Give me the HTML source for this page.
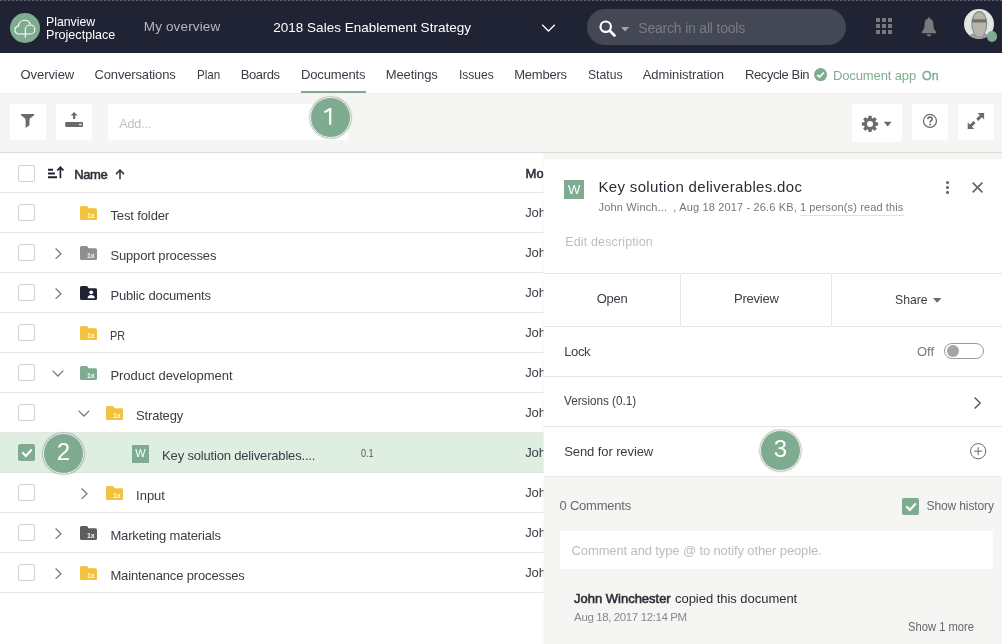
<!DOCTYPE html>
<html>
<head>
<meta charset="utf-8">
<title>Documents</title>
<style>
*{box-sizing:border-box;margin:0;padding:0}
html,body{width:1002px;height:644px;overflow:hidden;background:#fff}
body{font-family:"Liberation Sans",sans-serif;color:#3a3d46;position:relative}
.abs{position:absolute;white-space:nowrap}
.t{position:absolute;white-space:nowrap;line-height:1;font-size:13px;color:#3a3d46}
svg{position:absolute;overflow:visible}
#hdr{position:absolute;left:0;top:0;width:1002px;height:53px;background:#1f2333}
#nav{position:absolute;left:0;top:53px;width:1002px;height:40px;background:#fff}
#tool{position:absolute;left:0;top:93px;width:1002px;height:60px;background:#f5f5f3;border-bottom:1px solid #d9d9d7;box-shadow:inset 0 1px 0 #ebebea}
.btn{position:absolute;background:#fff;border-radius:2px}
#tbl{position:absolute;left:0;top:153px;width:544px;height:491px;background:#fff}
.row{position:absolute;left:0;width:544px;height:40px;border-bottom:1px solid #e6e6e6}
.cb{position:absolute;left:18px;top:11px;width:17px;height:17px;border:1px solid #cfd2cf;border-radius:2px;background:#fff}
#strip{position:absolute;left:544px;top:153px;width:458px;height:491px;background:#f5f5f3;box-shadow:-1px 0 0 rgba(245,245,243,.55)}
#panel{position:absolute;left:544px;top:159px;width:458px;height:485px;background:#fff}
.hl{position:absolute;left:0;width:458px;height:1px;background:#e6e6e6}
.vl{position:absolute;width:1px;background:#e6e6e6}
#cmt{position:absolute;left:0;top:317px;width:458px;height:168px;background:#f5f5f3;box-shadow:inset 0 1px 0 #ececea}
.badge{position:absolute;width:41px;height:41px;border-radius:50%;background:#7fac91;border:1.500px solid #f1f4f1;box-shadow:0 0 1.500px .5px rgba(0,0,0,.38);color:#fff;font-size:24px;text-align:center;line-height:35px}
.g{color:#7fac91}
.sb{-webkit-text-stroke:.55px currentColor}
#hdr,#nav,#tool,#tbl,#panel,.badge{will-change:transform}
</style>
</head>
<body>

<!-- HEADER -->
<div id="hdr">
  <div class="abs" style="left:0;top:0;width:1002px;height:1px;background:repeating-linear-gradient(90deg,#62656f 0 2px,#272b3a 2px 4px)"></div>
  <svg style="left:10px;top:13px" width="30" height="30" viewBox="0 0 30 30">
    <circle cx="15" cy="15" r="15" fill="#7fac91"/>
    <path d="M15.300 21H8.900C6.600 21 4.900 19.300 4.900 17.100 4.900 15 6.400 13.400 8.400 13.100 8.700 9.700 11.300 7.200 14.600 7.200 17.200 7.200 19.300 8.700 20.200 11" fill="none" stroke="#fff" stroke-width="1.100" stroke-linecap="round"/>
    <path d="M15.300 24.200V16.600C15.300 14 17.400 12 20.100 12 22.800 12 24.900 14 24.900 16.500 24.900 19 22.800 21 20.100 21H15.300" fill="none" stroke="#fff" stroke-width="1.100" stroke-linecap="round" stroke-linejoin="round"/>
  </svg>
  <div class="t" style="left:46.10px;top:14.57px;transform-origin:0 50%;transform:scaleX(0.9087);color:#fff;font-size:13.500px">Planview</div>
  <div class="t" style="left:46.10px;top:27.82px;transform-origin:0 50%;transform:scaleX(0.9314);color:#fff;font-size:13.500px">Projectplace</div>
  <div class="t" style="left:143.75px;top:19.82px;letter-spacing:0.148px;color:#b4b7be;font-size:13.500px">My overview</div>
  <div class="t" style="left:273.25px;top:20.82px;letter-spacing:0.012px;color:#fff;font-size:13.500px">2018 Sales Enablement Strategy</div>
  <svg style="left:541px;top:23px" width="15" height="10" viewBox="0 0 15 10"><path d="M1.200 1.700l6.300 6.300 6.300-6.300" fill="none" stroke="#fff" stroke-width="1.250"/></svg>

  <div class="abs" style="left:587px;top:9px;width:259px;height:36px;border-radius:18px;background:#444854"></div>
  <svg style="left:598px;top:19px" width="20" height="20" viewBox="0 0 20 20"><circle cx="7.700" cy="7.700" r="5.200" fill="none" stroke="#fff" stroke-width="2.200"/><path d="M11.800 11.800l4.700 4.700" stroke="#fff" stroke-width="2.700" stroke-linecap="round"/></svg>
  <svg style="left:621px;top:26.5px" width="9" height="5" viewBox="0 0 9 5"><path d="M0 0h8.200l-4.100 4.400z" fill="#a3a5ab"/></svg>
  <div class="t" style="left:638.25px;top:21.40px;letter-spacing:-0.195px;color:#787c86;font-size:14px">Search in all tools</div>

  <svg style="left:876px;top:18px" width="16" height="16" viewBox="0 0 16 16" fill="#7a7a7a" shape-rendering="crispEdges"><rect x="0" y="0" width="4" height="4"/><rect x="6" y="0" width="4" height="4"/><rect x="12" y="0" width="4" height="4"/><rect x="0" y="6" width="4" height="4"/><rect x="6" y="6" width="4" height="4"/><rect x="12" y="6" width="4" height="4"/><rect x="0" y="12" width="4" height="4"/><rect x="6" y="12" width="4" height="4"/><rect x="12" y="12" width="4" height="4"/></svg>
  <svg style="left:921px;top:16.500px" width="16" height="20" viewBox="0 0 16 20"><path d="M7.900.3c.6 0 1 .4 1 1v.5c2 .5 3.400 2.200 3.400 4.500 0 4 .6 6.300 2.800 8.600v1.400H.8v-1.400c2.200-2.300 2.800-4.600 2.800-8.600 0-2.300 1.400-4 3.400-4.500v-.5c0-.6.400-1 .9-1zM5.600 17.200h4.600c0 1.200-1 2.200-2.300 2.200s-2.300-1-2.300-2.200z" fill="#7a7a7a"/></svg>

  <svg style="left:964px;top:9px" width="30" height="30" viewBox="0 0 30 30">
    <defs><clipPath id="av"><circle cx="15" cy="15" r="15"/></clipPath></defs>
    <g clip-path="url(#av)">
      <rect width="30" height="30" fill="#e3e6e3"/>
      <path d="M3 30c1-3 3.500-4.500 6-5.500l12 0c2.500 1 5 2.500 6 5.500z" fill="#9c9d9c"/>
      <ellipse cx="15.300" cy="15" rx="8" ry="13" fill="#85868a"/>
      <ellipse cx="15.300" cy="15.500" rx="6.900" ry="12.200" fill="#b4b4b0"/>
      <rect x="8" y="10.300" width="14.600" height="3.200" rx="1" fill="#6f7275"/><g fill="#e8c23a"><circle cx="13" cy="6" r=".6"/><circle cx="15.500" cy="7.500" r=".6"/><circle cx="17.500" cy="6.500" r=".6"/><circle cx="14" cy="9" r=".6"/><circle cx="16.500" cy="9.500" r=".6"/><circle cx="12" cy="16" r=".6"/><circle cx="15" cy="17.500" r=".6"/><circle cx="18" cy="16" r=".6"/><circle cx="20" cy="17" r=".6"/><circle cx="14" cy="20.500" r=".6"/><circle cx="16.500" cy="22" r=".6"/><circle cx="15" cy="24" r=".6"/><circle cx="17" cy="26.500" r=".6"/></g>
      
    </g>
  </svg>
  <div class="abs" style="left:987px;top:31.400px;width:10.200px;height:10.200px;border-radius:50%;background:#7fac91"></div>
</div>

<!-- NAV -->
<div id="nav">
  <div class="t" style="left:20.50px;top:15.25px;letter-spacing:-0.062px;">Overview</div>
  <div class="t" style="left:94.50px;top:15.25px;letter-spacing:-0.155px;">Conversations</div>
  <div class="t" style="left:196.75px;top:15.25px;transform-origin:0 50%;transform:scaleX(0.8932);">Plan</div>
  <div class="t" style="left:240.75px;top:15.25px;letter-spacing:-0.391px;">Boards</div>
  <div class="t" style="left:301.00px;top:15.25px;letter-spacing:-0.156px;">Documents</div>
  <div class="t" style="left:385.75px;top:15.25px;letter-spacing:-0.107px;">Meetings</div>
  <div class="t" style="left:459.00px;top:15.25px;transform-origin:0 50%;transform:scaleX(0.9247);">Issues</div>
  <div class="t" style="left:514.25px;top:15.25px;letter-spacing:-0.240px;">Members</div>
  <div class="t" style="left:587.75px;top:15.25px;transform-origin:0 50%;transform:scaleX(0.9360);">Status</div>
  <div class="t" style="left:642.75px;top:15.25px;letter-spacing:-0.087px;">Administration</div>
  <div class="t" style="left:745.00px;top:15.25px;letter-spacing:-0.404px;">Recycle Bin</div>
  <svg style="left:814.300px;top:15.200px" width="13.100" height="13.100" viewBox="0 0 14 14"><circle cx="7" cy="7" r="7" fill="#7fac91"/><path d="M3.500 7.300l2.400 2.400 4.600-4.900" fill="none" stroke="#fff" stroke-width="1.800"/></svg>
  <div class="t g" style="left:833.00px;top:16.00px;letter-spacing:-0.124px;">Document app</div>
  <div class="t g sb" style="left:922.00px;top:16.00px;transform-origin:0 50%;transform:scaleX(0.9571);-webkit-text-stroke-width:.4px">On</div>
  <div class="abs" style="left:301px;top:38px;width:65px;height:2px;background:#7fac91"></div>
</div>

<!-- TOOLBAR -->
<div id="tool">
  <div class="btn" style="left:10px;top:11px;width:36px;height:36px"></div>
  <svg style="left:21.400px;top:20.900px" width="13.200" height="14" viewBox="0 0 13.200 14"><path d="M0 0H13.200V1C12.400 2.600 8.500 3.600 8.500 6V11.300L4.600 14V6C4.600 3.600.8 2.600 0 1Z" fill="#6b6b6b"/></svg>
  <div class="btn" style="left:56px;top:11px;width:36px;height:36px"></div>
  <svg style="left:65px;top:18.600px" width="18" height="15" viewBox="0 0 18 15">
    <rect x=".2" y="10.100" width="17.800" height="4.800" rx="1" fill="#6b6b6b"/>
    <rect x="14.100" y="11.800" width="2.400" height="1.400" fill="#fff"/>
    <path d="M9.100 0l3.500 3.600H10.200V7H8V3.600H5.600z" fill="#6b6b6b"/>
  </svg>
  <div class="btn" style="left:108px;top:11px;width:240px;height:36px"></div>
  <div class="t" style="left:119.30px;top:25.02px;letter-spacing:-0.154px;color:#bcbebc;font-size:12.500px">Add...</div>

  <div class="btn" style="left:852px;top:11px;width:50px;height:38px"></div>
  <div class="btn" style="left:912px;top:11px;width:36px;height:36px"></div>
  <div class="btn" style="left:958px;top:11px;width:36px;height:36px"></div>
</div>
<svg style="left:0;top:0" width="1002" height="160" viewBox="0 0 1002 160">
  <g transform="translate(870 123.900)" fill="#6b6b6b">
    <circle r="6.100"/>
    <rect x="-1.750" y="-8.150" width="3.500" height="5" rx=".7"/>
    <rect x="-1.750" y="-8.150" width="3.500" height="5" rx=".7" transform="rotate(45)"/>
    <rect x="-1.750" y="-8.150" width="3.500" height="5" rx=".7" transform="rotate(90)"/>
    <rect x="-1.750" y="-8.150" width="3.500" height="5" rx=".7" transform="rotate(135)"/>
    <rect x="-1.750" y="-8.150" width="3.500" height="5" rx=".7" transform="rotate(180)"/>
    <rect x="-1.750" y="-8.150" width="3.500" height="5" rx=".7" transform="rotate(225)"/>
    <rect x="-1.750" y="-8.150" width="3.500" height="5" rx=".7" transform="rotate(270)"/>
    <rect x="-1.750" y="-8.150" width="3.500" height="5" rx=".7" transform="rotate(315)"/>
    <circle r="3" fill="#fff"/>
  </g>
  <path d="M883.700 121.800h8l-4 4.700z" fill="#6b6b6b"/>
  <circle cx="930" cy="120.900" r="6.500" fill="none" stroke="#6b6b6b" stroke-width="1.200"/>
  <path d="M927.900 119.200c0-1.300 1-2.100 2.200-2.100s2.100.8 2.100 1.900c0 1.700-2.100 1.700-2.100 3.500" fill="none" stroke="#6b6b6b" stroke-width="1.550"/>
  <circle cx="930.100" cy="124.500" r=".95" fill="#6b6b6b"/>
  <path d="M984.100 112.900v6.600l-2.200-2.200-3.600 3.600-2.100-2.100 3.600-3.600-2.200-2.300z" fill="#6b6b6b"/>
  <path d="M967.700 129v-6.600l2.200 2.200 3.600-3.600 2.100 2.100-3.600 3.600 2.200 2.300z" fill="#6b6b6b"/>
</svg>
<!-- TABLE -->
<div id="tbl">
  <div class="row" style="top:0"><div class="cb" style="top:12px"></div></div>
  <svg style="left:47.800px;top:12.500px" width="17" height="13" viewBox="0 0 17 13"><path d="M0 3.700h5M0 7.500h6.900M0 11.300h9" stroke="#1f2230" stroke-width="1.900" fill="none"/><path d="M12.400 12.200V1.400M9.200 4.500l3.200-3.200 3.200 3.200" stroke="#1f2230" stroke-width="1.700" fill="none"/></svg>
  <div class="t sb" style="left:74.20px;top:14.90px;letter-spacing:-0.362px;color:#2d3039">Name</div>
  <svg style="left:115px;top:15.800px" width="10" height="11" viewBox="0 0 10 11"><path d="M5 10.200V1.200M1 5.100l4-4 4 4" stroke="#33363e" stroke-width="1.500" fill="none"/></svg>
  <div class="t sb" style="left:525.60px;top:14.00px;color:#2d3039">Mo</div>
  <div class="row" style="top:40px">
    <div class="cb"></div>
    <svg style="left:80px;top:13px" width="17" height="14" viewBox="0 0 17 14"><path d="M1.500 0H6.300c.6 0 .9.200 1.200.6L8.600 2.200H15.500A1.500 1.500 0 0 1 17 3.700V12.500A1.500 1.500 0 0 1 15.500 14H1.500A1.500 1.500 0 0 1 0 12.500V1.500A1.500 1.500 0 0 1 1.500 0Z" fill="#f0c23d"/><text x="7" y="12.100" font-family="Liberation Sans, sans-serif" font-size="7.100" font-weight="bold" fill="#fff" fill-opacity=".92" letter-spacing="-.2">1x</text></svg>
    <div class="t" style="left:110.40px;top:15.60px;letter-spacing:-0.118px;">Test folder</div>
    <div class="t" style="left:525.30px;top:13.00px;letter-spacing:-.2px">Joh</div>
  </div>
  <div class="row" style="top:80px">
    <div class="cb"></div>
    <svg style="left:54.7px;top:14.900px" width="7" height="11.400" viewBox="0 0 7 11.400"><path d="M.6.500l5.400 5.200-5.400 5.200" fill="none" stroke="#777" stroke-width="1.250"/></svg>
    <svg style="left:80px;top:13px" width="17" height="14" viewBox="0 0 17 14"><path d="M1.500 0H6.300c.6 0 .9.200 1.200.6L8.600 2.200H15.500A1.500 1.500 0 0 1 17 3.700V12.500A1.500 1.500 0 0 1 15.500 14H1.500A1.500 1.500 0 0 1 0 12.500V1.500A1.500 1.500 0 0 1 1.500 0Z" fill="#8f8f8f"/><text x="7" y="12.100" font-family="Liberation Sans, sans-serif" font-size="7.100" font-weight="bold" fill="#fff" fill-opacity=".92" letter-spacing="-.2">1x</text></svg>
    <div class="t" style="left:110.40px;top:15.60px;letter-spacing:-0.150px;">Support processes</div>
    <div class="t" style="left:525.30px;top:13.00px;letter-spacing:-.2px">Joh</div>
  </div>
  <div class="row" style="top:120px">
    <div class="cb"></div>
    <svg style="left:54.7px;top:14.900px" width="7" height="11.400" viewBox="0 0 7 11.400"><path d="M.6.500l5.400 5.200-5.400 5.200" fill="none" stroke="#777" stroke-width="1.250"/></svg>
    <svg style="left:80px;top:13px" width="17" height="14" viewBox="0 0 17 14"><path d="M1.500 0H6.300c.6 0 .9.200 1.200.6L8.600 2.200H15.500A1.500 1.500 0 0 1 17 3.700V12.500A1.500 1.500 0 0 1 15.500 14H1.500A1.500 1.500 0 0 1 0 12.500V1.500A1.500 1.500 0 0 1 1.500 0Z" fill="#1f2333"/><circle cx="11.200" cy="6.300" r="1.900" fill="#fff"/><path d="M7.600 12.200c0-2.200 1.600-3.200 3.600-3.200s3.600 1 3.600 3.200z" fill="#fff"/></svg>
    <div class="t" style="left:110.40px;top:15.60px;letter-spacing:-0.135px;">Public documents</div>
    <div class="t" style="left:525.30px;top:13.00px;letter-spacing:-.2px">Joh</div>
  </div>
  <div class="row" style="top:160px">
    <div class="cb"></div>
    <svg style="left:80px;top:13px" width="17" height="14" viewBox="0 0 17 14"><path d="M1.500 0H6.300c.6 0 .9.200 1.200.6L8.600 2.200H15.500A1.500 1.500 0 0 1 17 3.700V12.500A1.500 1.500 0 0 1 15.500 14H1.500A1.500 1.500 0 0 1 0 12.500V1.500A1.500 1.500 0 0 1 1.500 0Z" fill="#f0c23d"/><text x="7" y="12.100" font-family="Liberation Sans, sans-serif" font-size="7.100" font-weight="bold" fill="#fff" fill-opacity=".92" letter-spacing="-.2">1x</text></svg>
    <div class="t" style="left:110.40px;top:15.60px;transform-origin:0 50%;transform:scaleX(0.8360);">PR</div>
    <div class="t" style="left:525.30px;top:13.00px;letter-spacing:-.2px">Joh</div>
  </div>
  <div class="row" style="top:200px">
    <div class="cb"></div>
    <svg style="left:52.1px;top:17.300px" width="11.800" height="7" viewBox="0 0 11.800 7"><path d="M.5.600l5.400 5.400 5.400-5.400" fill="none" stroke="#777" stroke-width="1.250"/></svg>
    <svg style="left:80px;top:13px" width="17" height="14" viewBox="0 0 17 14"><path d="M1.500 0H6.300c.6 0 .9.200 1.200.6L8.600 2.200H15.500A1.500 1.500 0 0 1 17 3.700V12.500A1.500 1.500 0 0 1 15.500 14H1.500A1.500 1.500 0 0 1 0 12.500V1.500A1.500 1.500 0 0 1 1.500 0Z" fill="#7fac91"/><text x="7" y="12.100" font-family="Liberation Sans, sans-serif" font-size="7.100" font-weight="bold" fill="#fff" fill-opacity=".92" letter-spacing="-.2">1x</text></svg>
    <div class="t" style="left:110.40px;top:15.60px;letter-spacing:-0.042px;">Product development</div>
    <div class="t" style="left:525.30px;top:13.00px;letter-spacing:-.2px">Joh</div>
  </div>
  <div class="row" style="top:240px">
    <div class="cb"></div>
    <svg style="left:78.1px;top:17.300px" width="11.800" height="7" viewBox="0 0 11.800 7"><path d="M.5.600l5.400 5.400 5.400-5.400" fill="none" stroke="#777" stroke-width="1.250"/></svg>
    <svg style="left:106px;top:13px" width="17" height="14" viewBox="0 0 17 14"><path d="M1.500 0H6.300c.6 0 .9.200 1.200.6L8.600 2.200H15.500A1.500 1.500 0 0 1 17 3.700V12.500A1.500 1.500 0 0 1 15.500 14H1.500A1.500 1.500 0 0 1 0 12.500V1.500A1.500 1.500 0 0 1 1.500 0Z" fill="#f0c23d"/><text x="7" y="12.100" font-family="Liberation Sans, sans-serif" font-size="7.100" font-weight="bold" fill="#fff" fill-opacity=".92" letter-spacing="-.2">1x</text></svg>
    <div class="t" style="left:136.10px;top:15.60px;letter-spacing:-0.189px;">Strategy</div>
    <div class="t" style="left:525.30px;top:13.00px;letter-spacing:-.2px">Joh</div>
  </div>
  <div class="row" style="top:280px;background:#deeee0;border-bottom-color:#d6e8d9">
    <div class="cb" style="background:#7fac91;border-color:#7fac91"></div>
    <svg style="left:18px;top:11px" width="17" height="17" viewBox="0 0 17 17"><path d="M4.300 8.200l3.500 3.700 6-6.400" fill="none" stroke="#fff" stroke-width="2.100"/></svg>
    <div class="abs" style="left:132px;top:12px;width:17px;height:17.500px;background:#7fac91"></div>
    <div class="t" style="left:135.300px;top:14.800px;font-size:11px;color:#fff">W</div>
    <div class="t" style="left:162.10px;top:15.60px;letter-spacing:-0.177px;">Key solution deliverables....</div>
    <div class="t" style="left:361.30px;top:15.49px;transform-origin:0 50%;transform:scaleX(0.8302);font-size:11px;color:#555">0.1</div>
    <div class="t" style="left:525.30px;top:13.00px;letter-spacing:-.2px">Joh</div>
  </div>
  <div class="row" style="top:320px">
    <div class="cb"></div>
    <svg style="left:80.7px;top:14.900px" width="7" height="11.400" viewBox="0 0 7 11.400"><path d="M.6.500l5.400 5.200-5.400 5.200" fill="none" stroke="#777" stroke-width="1.250"/></svg>
    <svg style="left:106px;top:13px" width="17" height="14" viewBox="0 0 17 14"><path d="M1.500 0H6.300c.6 0 .9.200 1.200.6L8.600 2.200H15.500A1.500 1.500 0 0 1 17 3.700V12.500A1.500 1.500 0 0 1 15.500 14H1.500A1.500 1.500 0 0 1 0 12.500V1.500A1.500 1.500 0 0 1 1.500 0Z" fill="#f0c23d"/><text x="7" y="12.100" font-family="Liberation Sans, sans-serif" font-size="7.100" font-weight="bold" fill="#fff" fill-opacity=".92" letter-spacing="-.2">1x</text></svg>
    <div class="t" style="left:136.10px;top:15.60px;letter-spacing:-0.030px;">Input</div>
    <div class="t" style="left:525.30px;top:13.00px;letter-spacing:-.2px">Joh</div>
  </div>
  <div class="row" style="top:360px">
    <div class="cb"></div>
    <svg style="left:54.7px;top:14.900px" width="7" height="11.400" viewBox="0 0 7 11.400"><path d="M.6.500l5.400 5.200-5.400 5.200" fill="none" stroke="#777" stroke-width="1.250"/></svg>
    <svg style="left:80px;top:13px" width="17" height="14" viewBox="0 0 17 14"><path d="M1.500 0H6.300c.6 0 .9.200 1.200.6L8.600 2.200H15.500A1.500 1.500 0 0 1 17 3.700V12.500A1.500 1.500 0 0 1 15.500 14H1.500A1.500 1.500 0 0 1 0 12.500V1.500A1.500 1.500 0 0 1 1.500 0Z" fill="#5e5e5e"/><text x="7" y="12.100" font-family="Liberation Sans, sans-serif" font-size="7.100" font-weight="bold" fill="#fff" fill-opacity=".92" letter-spacing="-.2">1x</text></svg>
    <div class="t" style="left:110.40px;top:15.60px;letter-spacing:-0.158px;">Marketing materials</div>
    <div class="t" style="left:525.30px;top:13.00px;letter-spacing:-.2px">Joh</div>
  </div>
  <div class="row" style="top:400px">
    <div class="cb"></div>
    <svg style="left:54.7px;top:14.900px" width="7" height="11.400" viewBox="0 0 7 11.400"><path d="M.6.500l5.400 5.200-5.400 5.200" fill="none" stroke="#777" stroke-width="1.250"/></svg>
    <svg style="left:80px;top:13px" width="17" height="14" viewBox="0 0 17 14"><path d="M1.500 0H6.300c.6 0 .9.200 1.200.6L8.600 2.200H15.500A1.500 1.500 0 0 1 17 3.700V12.500A1.500 1.500 0 0 1 15.500 14H1.500A1.500 1.500 0 0 1 0 12.500V1.500A1.500 1.500 0 0 1 1.500 0Z" fill="#f0c23d"/><text x="7" y="12.100" font-family="Liberation Sans, sans-serif" font-size="7.100" font-weight="bold" fill="#fff" fill-opacity=".92" letter-spacing="-.2">1x</text></svg>
    <div class="t" style="left:110.40px;top:15.60px;letter-spacing:-0.141px;">Maintenance processes</div>
    <div class="t" style="left:525.30px;top:13.00px;letter-spacing:-.2px">Joh</div>
  </div>
</div>
<!-- PANEL -->
<div id="strip"></div>
<div id="panel">
  <div class="abs" style="left:20.400px;top:21px;width:19.600px;height:19px;background:#7fac91"></div>
  <div class="t" style="left:23.90px;top:24.20px;color:#fff;font-size:13px">W</div>
  <div class="t" style="left:54.50px;top:20.20px;letter-spacing:0.325px;font-size:15px;color:#2b2e37">Key solution deliverables.doc</div>
  <div class="t" style="left:54.50px;top:42.59px;letter-spacing:0.163px;font-size:11px;color:#777">John Winch...</div>
  <div class="t" style="left:129.30px;top:42.59px;letter-spacing:0.162px;font-size:11px;color:#777">, Aug 18 2017 - 26.6 KB,</div>
  <div class="t" style="left:255.90px;top:42.59px;letter-spacing:0.130px;font-size:11px;color:#777">1 person(s) read this</div>
  <div class="abs" style="left:256px;top:56px;width:104px;height:1px;background:#e2e2e2"></div>
  <svg style="left:401px;top:21px" width="40" height="16" viewBox="0 0 40 16">
    <circle cx="2.500" cy="2.600" r="1.550" fill="#696969"/><circle cx="2.500" cy="7.500" r="1.550" fill="#696969"/><circle cx="2.500" cy="12.400" r="1.550" fill="#696969"/>
    <path d="M27.700 2.700l9.700 9.700M37.400 2.700l-9.700 9.700" stroke="#666" stroke-width="1.700" fill="none"/>
  </svg>
  <div class="t" style="left:21.30px;top:76.92px;letter-spacing:0.135px;font-size:12.500px;color:#bcbfbc">Edit description</div>

  <div class="hl" style="top:114px"></div>
  <div class="t" style="left:52.70px;top:133.10px;letter-spacing:-0.271px;">Open</div>
  <div class="vl" style="left:136px;top:114px;height:53px"></div>
  <div class="t" style="left:190.00px;top:133.10px;letter-spacing:-0.225px;">Preview</div>
  <div class="vl" style="left:287px;top:114px;height:53px"></div>
  <div class="t" style="left:350.80px;top:134.30px;transform-origin:0 50%;transform:scaleX(0.9394);">Share</div>
  <svg style="left:389px;top:138.8px" width="8.400" height="5" viewBox="0 0 8.400 5"><path d="M0 0h8.400l-4.200 4.800z" fill="#6b6b6b"/></svg>

  <div class="hl" style="top:167px"></div>
  <div class="t" style="left:20.30px;top:185.90px;letter-spacing:-0.423px;">Lock</div>
  <div class="t" style="left:373.00px;top:185.90px;letter-spacing:-0.055px;color:#777">Off</div>
  <div class="abs" style="left:400px;top:184px;width:40px;height:16px;border:1px solid #9a9a9a;border-radius:8px;background:#fff"></div>
  <div class="abs" style="left:402.500px;top:186px;width:12.400px;height:12.400px;border-radius:50%;background:#a4a4a4"></div>

  <div class="hl" style="top:217px"></div>
  <div class="t" style="left:20.30px;top:235.10px;transform-origin:0 50%;transform:scaleX(0.8990);">Versions (0.1)</div>
  <svg style="left:430.300px;top:238px" width="7" height="12" viewBox="0 0 7 12"><path d="M.6.500l5.600 5.500-5.600 5.500" fill="none" stroke="#555" stroke-width="1.400"/></svg>

  <div class="hl" style="top:267px"></div>
  <div class="t" style="left:20.30px;top:286.00px;letter-spacing:-0.102px;">Send for review</div>
  <svg style="left:426px;top:284.2px" width="16.400" height="16.400" viewBox="0 0 16.400 16.400"><circle cx="8.200" cy="8.200" r="7.600" fill="none" stroke="#666" stroke-width="1"/><path d="M8.200 4.200v8M4.200 8.200h8" stroke="#666" stroke-width="1" fill="none"/></svg>

  <div id="cmt">
    <div class="t" style="left:15.60px;top:23.00px;letter-spacing:-0.234px;color:#686868">0 Comments</div>
    <div class="abs" style="left:358px;top:22px;width:17px;height:17px;border-radius:2px;background:#7fac91"></div>
    <svg style="left:358px;top:22px" width="17" height="17" viewBox="0 0 17 17"><path d="M4.300 8.200l3.500 3.700 6-6.400" fill="none" stroke="#fff" stroke-width="2.100"/></svg>
    <div class="t" style="left:382.60px;top:24.14px;letter-spacing:-0.128px;font-size:12px;color:#686868">Show history</div>
    <div class="abs" style="left:16px;top:55px;width:433px;height:38px;background:#fff"></div>
    <div class="t" style="left:27.60px;top:68.10px;letter-spacing:-0.127px;color:#bcbebc">Comment and type @ to notify other people.</div>
    <div class="t sb" style="left:30.10px;top:116.30px;letter-spacing:-0.016px;color:#2b2e37">John Winchester</div>
    <div class="t" style="left:131.00px;top:116.30px;letter-spacing:-0.035px;color:#2b2e37">copied this document</div>
    <div class="t" style="left:30.10px;top:136.37px;letter-spacing:-0.387px;font-size:11.500px;color:#888">Aug 18, 2017 12:14 PM</div>
    <div class="t" style="left:363.50px;top:145.44px;transform-origin:0 50%;transform:scaleX(0.9335);font-size:12px;color:#686868">Show 1 more</div>
  </div>
</div>

<div class="badge" style="left:310px;top:96.500px"><svg style="left:12.500px;top:9.800px" width="8" height="17" viewBox="0 0 8 17"><path d="M7.300 0V16.850H5.100V2.700L.9 5.300 0 3.500 5.500 0Z" fill="#fff"/></svg></div>
<div class="badge" style="left:42.800px;top:432.700px">2</div>
<div class="badge" style="left:760.200px;top:430.200px">3</div>
</body>
</html>
